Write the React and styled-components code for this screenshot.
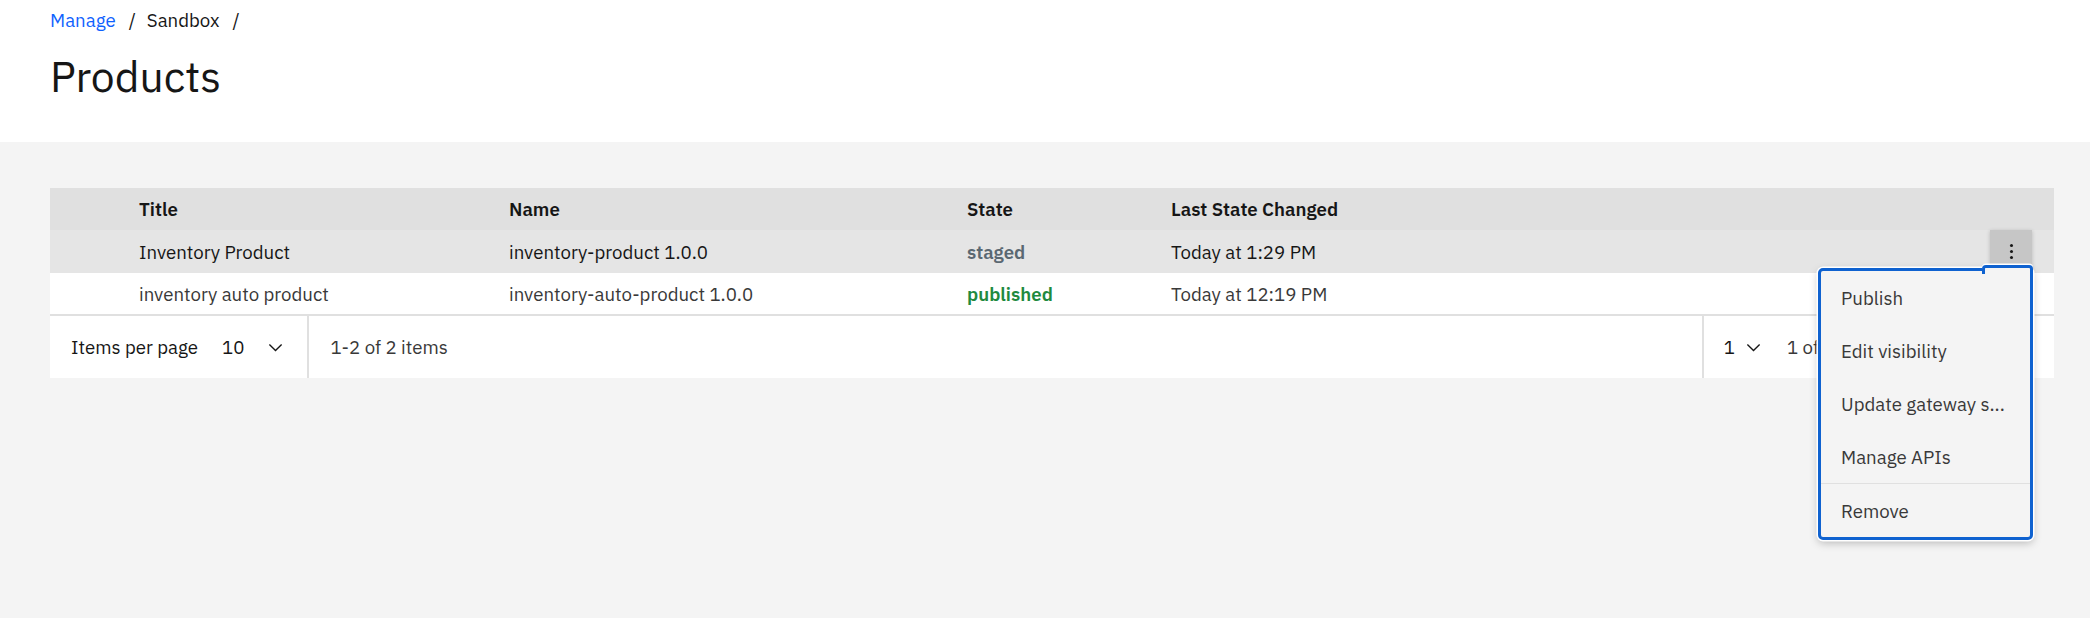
import React from 'react';
import styled, { createGlobalStyle } from 'styled-components';

const GlobalStyle = createGlobalStyle`
  html, body { margin: 0; padding: 0; background: #f4f4f4; }
  body {
    font-family: "IBM Plex Sans", Roboto, "Noto Sans", sans-serif;
    color: #161616;
    -webkit-font-smoothing: antialiased;
  }
  * { box-sizing: border-box; }
`;

const Page = styled.div`
  min-height: 618px;
  display: flex;
  flex-direction: column;
  background: #f4f4f4;
`;

const TopBar = styled.header`
  background: #ffffff;
  height: 142px;
  padding: 8px 36px 0 50px;
`;

const Breadcrumb = styled.nav`
  display: flex;
  align-items: center;
  font-size: 18.67px;
  line-height: 24px;
`;

const Crumb = styled.span`
  color: ${p => (p.$link ? '#0f62fe' : '#161616')};
`;

const Sep = styled.span`
  margin: 0 11px 0 13px;
  color: #161616;
`;

const Title = styled.h1`
  margin: 18px 0 0;
  font-size: 42.67px;
  line-height: 53.33px;
  font-weight: 400;
  color: #161616;
`;

const Content = styled.main`
  flex: 1;
  padding: 46px 36px 0 50px;
`;

const Table = styled.div`
  background: #ffffff;
`;

const rowBg = { head: '#e0e0e0', hover: '#e5e5e5', plain: '#ffffff' };

const Row = styled.div`
  display: grid;
  grid-template-columns: 68px 370px 458px 204px 1fr 64px;
  height: ${p => (p.$variant === 'head' ? 42 : 43)}px;
  background: ${p => rowBg[p.$variant]};
  color: ${p => (p.$variant === 'plain' ? '#393939' : '#161616')};
  font-weight: ${p => (p.$variant === 'head' ? 600 : 400)};
  border-bottom: ${p => (p.$last ? '2px solid #e0e0e0' : 'none')};
  font-size: 18.67px;
`;

const Cell = styled.div`
  display: flex;
  align-items: center;
  padding-left: 21px;
  white-space: nowrap;
`;

const stateColor = { staged: '#5a6872', published: '#218a3e' };

const StateText = styled.span`
  font-weight: 600;
  color: ${p => stateColor[p.$state]};
`;

const ActionCell = styled.div`
  position: relative;
  display: flex;
  align-items: flex-start;
`;

const KebabButton = styled.button`
  width: 42px;
  height: 42px;
  border: none;
  padding: 0;
  background: #c6c6c6;
  display: flex;
  align-items: center;
  justify-content: center;
  box-shadow: 0 1px 4px rgba(0, 0, 0, 0.2);
  cursor: pointer;
`;

const Menu = styled.ul`
  position: absolute;
  top: 38px;
  right: 21px;
  width: 215px;
  margin: 0;
  padding: 0;
  list-style: none;
  background: #f4f4f4;
  border: 3px solid #0f62d0;
  border-radius: 5px;
  box-shadow: 0 0 0 1.5px #ffffff, 0 3px 8px rgba(0, 0, 0, 0.25);
  z-index: 10;

  &::before {
    content: '';
    position: absolute;
    top: -6px;
    right: -3px;
    width: 45px;
    height: 6px;
    background: #f4f4f4;
    border: 3px solid #0f62d0;
    border-bottom: none;
    border-radius: 4px 4px 0 0;
    box-shadow: 0 -1.5px 0 #ffffff;
  }
`;

const MenuItem = styled.li`
  position: relative;
  height: ${p => (p.$divider ? 54 : 53)}px;
  display: flex;
  align-items: center;
  padding-left: 20px;
  padding-right: 12px;
  font-size: 18.67px;
  color: #393939;
  border-top: ${p => (p.$divider ? '1.5px solid #e0e0e0' : 'none')};
  white-space: nowrap;
`;

const Footer = styled.div`
  display: flex;
  align-items: stretch;
  height: 62px;
  background: #ffffff;
  font-size: 18.67px;
  color: #161616;
`;

const FooterGroup = styled.div`
  display: flex;
  align-items: center;
  margin-left: ${p => (p.$right ? 'auto' : '0')};
`;

const FooterText = styled.span`
  padding-left: ${p => p.$pl ?? 21}px;
  padding-right: ${p => p.$pr ?? 0}px;
  width: ${p => (p.$w ? `${p.$w}px` : 'auto')};
  flex: none;
  overflow: hidden;
  color: ${p => (p.$muted ? '#393939' : '#161616')};
  white-space: nowrap;
`;

const Select = styled.div`
  display: flex;
  align-items: center;
  margin-left: ${p => p.$ml}px;
  padding-right: ${p => p.$pr}px;
  gap: ${p => p.$gap}px;
  align-self: stretch;
`;

const Divider = styled.div`
  width: 2px;
  align-self: stretch;
  background: #e0e0e0;
`;

const NavButton = styled.button`
  width: 64px;
  align-self: stretch;
  border: none;
  border-left: 2px solid #e0e0e0;
  background: transparent;
  display: flex;
  align-items: center;
  justify-content: center;
  padding: 0;
  color: ${p => (p.$disabled ? '#c6c6c6' : '#161616')};
`;

const Chevron = ({ dir = 'down' }) => {
  const rot = { down: 0, left: 90, right: -90 }[dir];
  return (
    <svg width="21" height="21" viewBox="0 0 16 16" fill="currentColor" style={{ transform: `rotate(${rot}deg)` }}>
      <path d="M8 11L3 6l.7-.7L8 9.6l4.3-4.3.7.7z" />
    </svg>
  );
};

const Kebab = () => (
  <svg width="21" height="21" viewBox="0 0 16 16" fill="#161616">
    <circle cx="8" cy="3.5" r="1.15" />
    <circle cx="8" cy="8" r="1.15" />
    <circle cx="8" cy="12.5" r="1.15" />
  </svg>
);

const rows = [
  { title: 'Inventory Product', name: 'inventory-product 1.0.0', state: 'staged', changed: 'Today at 1:29 PM', hover: true },
  { title: 'inventory auto product', name: 'inventory-auto-product 1.0.0', state: 'published', changed: 'Today at 12:19 PM' },
];

const menuItems = ['Publish', 'Edit visibility', 'Update gateway s...', 'Manage APIs'];

export default function App() {
  return (
    <>
      <GlobalStyle />
      <Page>
        <TopBar>
          <Breadcrumb>
            <Crumb $link>Manage</Crumb>
            <Sep>/</Sep>
            <Crumb>Sandbox</Crumb>
            <Sep>/</Sep>
          </Breadcrumb>
          <Title>Products</Title>
        </TopBar>
        <Content>
          <Table>
            <Row $variant="head">
              <Cell />
              <Cell>Title</Cell>
              <Cell>Name</Cell>
              <Cell>State</Cell>
              <Cell>Last State Changed</Cell>
              <Cell />
            </Row>
            {rows.map((r, i) => (
              <Row key={r.name} $variant={r.hover ? 'hover' : 'plain'} $last={i === rows.length - 1}>
                <Cell />
                <Cell>{r.title}</Cell>
                <Cell>{r.name}</Cell>
                <Cell>
                  <StateText $state={r.state}>{r.state}</StateText>
                </Cell>
                <Cell>{r.changed}</Cell>
                <ActionCell>
                  {r.hover && (
                    <>
                      <KebabButton aria-label="Options">
                        <Kebab />
                      </KebabButton>
                      <Menu>
                        {menuItems.map(m => (
                          <MenuItem key={m}>{m}</MenuItem>
                        ))}
                        <MenuItem $divider>Remove</MenuItem>
                      </Menu>
                    </>
                  )}
                </ActionCell>
              </Row>
            ))}
            <Footer>
              <FooterGroup>
                <FooterText>Items per page</FooterText>
                <Select $ml={24} $pr={21} $gap={21}>
                  <span>10</span>
                  <Chevron />
                </Select>
                <Divider />
                <FooterText $muted>1-2 of 2 items</FooterText>
              </FooterGroup>
              <FooterGroup $right>
                <Divider />
                <Select $ml={20} $pr={0} $gap={8}>
                  <span>1</span>
                  <Chevron />
                </Select>
                <FooterText $pl={23} $pr={21} $w={162} $muted>1 of 1 page</FooterText>
                <NavButton $disabled>
                  <Chevron dir="left" />
                </NavButton>
                <NavButton $disabled>
                  <Chevron dir="right" />
                </NavButton>
              </FooterGroup>
            </Footer>
          </Table>
        </Content>
      </Page>
    </>
  );
}
